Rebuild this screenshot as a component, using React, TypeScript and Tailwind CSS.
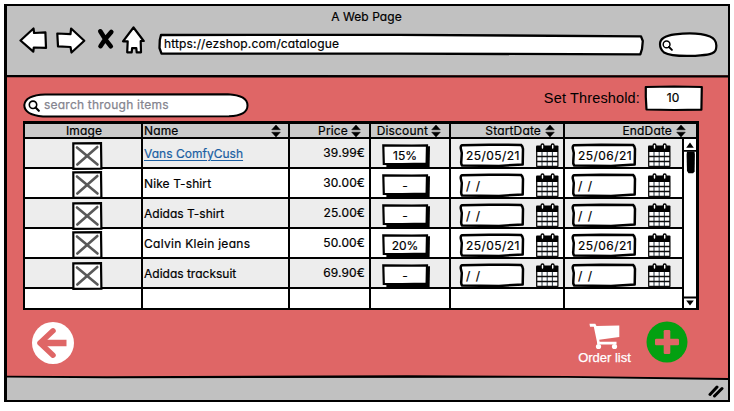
import type { ReactNode } from "react";

type Item = { name: string; track: string; price: string; discount: string; start: string; end: string };

const link = "tracking-[0.02px] text-[#1b5fa3] underline decoration-1 underline-offset-2 [-webkit-text-stroke:0.2px_#1b5fa3]";

const items: Item[] = [
  { name: "Vans ComfyCush", track: link, price: "39.99€", discount: "15%", start: "25/05/21", end: "25/06/21" },
  { name: "Nike T-shirt", track: "tracking-[0.1px]", price: "30.00€", discount: "-", start: "/ /", end: "/ /" },
  { name: "Adidas T-shirt", track: "tracking-[0px]", price: "25.00€", discount: "-", start: "/ /", end: "/ /" },
  { name: "Calvin Klein jeans", track: "tracking-[0.28px]", price: "50.00€", discount: "20%", start: "25/05/21", end: "25/06/21" },
  { name: "Adidas tracksuit", track: "tracking-[0px]", price: "69.90€", discount: "-", start: "/ /", end: "/ /" },
];

const columns = "grid grid-cols-[118px_147px_81px_80px_114px_119px_12px]";

/* A box whose outline is a hand-drawn path */
function Sketch({ w, h, d, sw = 3, className, children }: { w: number; h: number; d: string; sw?: number; className: string; children?: ReactNode }) {
  return (
    <div className={`relative flex shrink-0 items-center ${className}`}>
      <svg className="absolute inset-0" width={w} height={h} viewBox={`0 0 ${w} ${h}`} fill="white" stroke="black" strokeWidth={sw} strokeLinejoin="round">
        <path d={d} />
      </svg>
      <div className="relative flex w-full items-center">{children}</div>
    </div>
  );
}

function Sorter() {
  return (
    <svg width="10" height="12" viewBox="0 0 10 12" className="shrink-0">
      <path d="M5 0 9.3 4.8H.7zM.7 7.2h8.6L5 12z" stroke="black" strokeWidth=".5" strokeLinejoin="round" />
    </svg>
  );
}

function Magnifier({ className }: { className: string }) {
  return (
    <svg viewBox="0 0 12 12" className={className} fill="none" stroke="black">
      <circle cx="5" cy="4.8" r="3.7" strokeWidth="1.6" />
      <path d="m7.6 7.6 3.2 3.2" strokeWidth="2.1" strokeLinecap="round" />
    </svg>
  );
}

function Calendar() {
  return (
    <svg width="23" height="25" viewBox="0 0 23 25" className="shrink-0">
      <path d="M.5 4h22v20H.5z" fill="white" />
      <path d="M0 3.500q0-1 1-1h20.500q1 0 1 1V9H0z" />
      <path d="M6 9v14M11.200 9v14M16.400 9v14" stroke="#3c4a55" strokeWidth="1.100" />
      <path d="M.700 9v14.500M21.900 9v14.500M.3 13.500h22M.3 18.500h22M.3 23.500h22" stroke="#0c0c0c" strokeWidth="1.300" />
      <path d="M5.100 2.400a1.400 1.400 0 0 1 2.800 0v2.600a1.400 1.400 0 0 1-2.800 0zM15.300 2.400a1.400 1.400 0 0 1 2.800 0v2.600a1.400 1.400 0 0 1-2.800 0z" fill="white" stroke="black" strokeWidth="1.300" />
    </svg>
  );
}

function ImagePlaceholder() {
  return (
    <svg width="31" height="28" viewBox="0 0 31 28" className="relative z-10">
      <path d="M1.3 1.3 29 1.2l.4 25.4-28 .2z" fill="white" stroke="black" strokeWidth="2.2" />
      <path d="m5 5.500 20.500 17M25.300 5 5.300 22.500" stroke="#595959" strokeWidth="2.600" strokeLinecap="round" />
    </svg>
  );
}

function DateField({ value }: { value: string }) {
  return (
    <>
      <Sketch w={66} h={25} className="h-[25px] w-[66px]" d="M3 2.200 30 1.700 62 1.900Q63.600 3 64 6L63.700 21.500 40 22.900 3.200 22.600Q1.800 21 2.300 18L2.800 10 1.700 5Q1.700 2.500 3 2.200Z" sw={2.5}>
        <span className={`whitespace-pre pl-[7px] ${value === "/ /" ? "tracking-[1px]" : "tracking-[0.45px]"}`}>{value}</span>
      </Sketch>
      <div className="ml-[11px]">
        <Calendar />
      </div>
    </>
  );
}

function DiscountButton({ value }: { value: string }) {
  return (
    <div className="relative flex h-[24px] w-[48px] items-center">
      <svg className="absolute inset-0" width="48" height="24" viewBox="0 0 48 24">
        <path d="M4 3 48 2.200 47.600 23 4.400 23.300z" />
        <path d="M1.300 1.300 30 1.600l15-.2-.4 18.100L20 20.200 1.800 20z" fill="white" stroke="black" strokeWidth="2.200" />
      </svg>
      <span className="relative w-[46px] pb-px text-center">{value}</span>
    </div>
  );
}

const cell = "border-r-2 border-black";

function Row({ item, shaded, imageOffset }: { item: Item; shaded: boolean; imageOffset: string }) {
  return (
    <div className={`${columns} grid-rows-[30px] ${shaded ? "bg-[#ededed]" : "bg-white"}`}>
      <div className={`${cell} flex items-start justify-center border-b-2 pl-2 ${imageOffset}`}>
        <ImagePlaceholder />
      </div>
      <div className={`${cell} flex items-center border-b-2 pl-px pt-px`}>
        <span className={item.track}>{item.name}</span>
      </div>
      <div className={`${cell} flex items-center justify-end border-b-2 pr-[4px] tracking-[0.15px]`}>{item.price}</div>
      <div className={`${cell} flex items-start border-b-2 pl-[11px] pt-[5px]`}>
        <DiscountButton value={item.discount} />
      </div>
      <div className={`${cell} flex items-start border-b-2 pl-[8px] pt-[4px]`}>
        <DateField value={item.start} />
      </div>
      <div className={`${cell} flex items-start border-b-2 pl-[6px] pt-[4px]`}>
        <DateField value={item.end} />
      </div>
      <div className="bg-white" />
    </div>
  );
}

function Scrollbar() {
  return (
    <svg width="12" height="169" viewBox="0 0 12 169" className="absolute right-0 top-[15px]">
      <path d="M0 0h12v169H0z" fill="white" />
      <path d="M0 11.800h12M0 158.500h12" stroke="black" strokeWidth="1.800" />
      <path d="M6 3.500 9.800 8.800H2.200zM2.200 161.500h7.600L6 166.500z" />
      <path d="M3 12.500h7.500l.4 3-.3 17-1.500 1.800H4.500L3 32 2.600 16z" />
    </svg>
  );
}

export default function App() {
  return (
    <div className="h-[411px] w-[734px] overflow-hidden bg-white pl-[4px] pt-[4px] text-[12px] leading-[14px] text-black [-webkit-text-stroke:0.2px_black] [font-family:Inter,'Liberation_Sans',sans-serif] [font-feature-settings:'cv11','calt'_0]">
      <div className="flex h-[398px] w-[726px] flex-col border-2 border-l-[3px] border-black bg-[#df6666]">
        <header className="h-[69px] bg-[#c1c1c1] text-center">
          <div className="pr-[2px] pt-[4px] tracking-[0.05px]">A Web Page</div>
          <div className="flex pl-[12px] pt-[2px]">
            <svg width="139" height="32" viewBox="19 24 139 32" fill="white" stroke="black" strokeWidth="2.200" strokeLinejoin="round" className="shrink-0">
              <path d="M20.500 38.500 33.500 26.500l.6 4.500 11.300-.6.6 15.500-12.200-.4-.5 4.200z" />
              <path d="m57.300 31.500 13.200.7.6-5.700 13.200 12.200L71.500 50.500l-1-5.500-12.500-.6z" />
              <path d="m100.300 29.300 5 8 5.500 7M111.300 30l-6 7-4.800 7.200" fill="none" strokeWidth="4.600" strokeLinecap="round" />
              <path d="M133.500 25.500 143.700 39h-3l.3 11.300h-4.300l-.4-4.200-4.200.1-.4 4.200-4.500-.1.500-11h-4.700z" />
            </svg>
            <Sketch w={486} h={24} className="mt-[7px] h-[24px] w-[486px]" sw={2.3} d="M3 2 240 1.800 483 3.300 484.800 8 484 16 482.300 21.300 240 20.700 3.500 20.600 1.500 15 1.800 7Z">
              <span className="pb-[3px] pl-[6px] tracking-[0.14px]">https://ezshop.com/catalogue</span>
            </Sketch>
            <Sketch w={62} h={26} className="ml-[13px] mt-[6px] h-[26px] w-[62px]" sw={2.2} d="M3 12C3 6 9 3.500 18 2.400 30 1 45 1.500 53 4.500 59 7 60 12 59 17 58 22.500 50 23 38 23.800 25 24.300 13 24 7 20.500 4 18 3 15 3 12Z">
              <Magnifier className="ml-[5px] h-[11px] w-[11px]" />
            </Sketch>
          </div>
        </header>
        <svg width="721" height="3" viewBox="0 0 721 3" preserveAspectRatio="none" className="shrink-0">
          <path d="M0 0h300l150 .3H721V2.600H400L0 2.200z" />
        </svg>

        <main className="h-[297px] px-[16px] pt-[7px]">
          <div className="flex h-[36px]">
            <Sketch w={226} h={25} className="mt-[8px] h-[25px] w-[226px]" sw={2} d="M1.300 12C2 5 9 2 22 1.500L205 1.300C218 2 224.500 6 224.500 12.500 224.500 19 218 22.800 206 23.300L20 23.400C8 22.500 1.300 19 1.300 12Z">
              <Magnifier className="ml-[5px] h-[12px] w-[12px]" />
              <span className="pb-px pl-[4px] tracking-[0.22px] text-[#85858f] [-webkit-text-stroke:0.25px_#85858f]">search through items</span>
            </Sketch>
            <span className="ml-auto pr-[4px] pt-[5px] text-[14.5px] leading-[16px] tracking-[0.15px] [-webkit-text-stroke:0px] [font-family:'Liberation_Sans',sans-serif]">Set Threshold:</span>
            <Sketch w={60} h={27} className="mr-[8px] h-[27px] w-[60px]" sw={2.2} d="M1.800 2 30 1.500 57.800 2 57.400 24.700 30 25 2.500 24.500 1.800 12Z">
              <span className="w-full pb-px pr-[2px] text-center">10</span>
            </Sketch>
          </div>

          <section className="relative h-[189px] w-[676px] border-b-2 border-l-2 border-r-[3px] border-t-[3px] border-black">
            <div className={`${columns} h-[15px] border-b-2 border-black bg-[#cacaca] leading-[13px] tracking-[0.15px]`}>
              <div className={`${cell} pl-0.5 text-center`}>Image</div>
              <div className={`${cell} flex items-center justify-between pl-px pr-[7px]`}>Name<Sorter /></div>
              <div className={`${cell} flex items-center justify-end gap-[3px] pr-[8px]`}>Price<Sorter /></div>
              <div className={`${cell} flex items-center justify-end gap-[3px] pr-[8px]`}>Discount<Sorter /></div>
              <div className={`${cell} flex items-center justify-end gap-[4px] pr-[8px]`}>StartDate<Sorter /></div>
              <div className="col-span-2 flex items-center justify-end gap-[4px] pr-[10px]">EndDate<Sorter /></div>
            </div>
            {items.map((item, i) => (
              <Row key={item.name} item={item} shaded={i % 2 === 0} imageOffset={i === 1 || i === 3 ? "pt-[2px]" : "pt-[3px]"} />
            ))}
            <div className={`${columns} h-[19px] bg-white`}>
              <div className={cell} /><div className={cell} /><div className={cell} />
              <div className={cell} /><div className={cell} /><div className={cell} /><div />
            </div>
            <Scrollbar />
          </section>

          <div className="flex pt-[11px]">
            <svg width="44" height="44" viewBox="0 0 44 44" className="ml-[8px]">
              <circle cx="22" cy="22" r="21" fill="white" />
              <path d="M9 22 22 9.800M9 22 22 34.200" stroke="#df6666" strokeWidth="5.500" strokeLinecap="round" />
              <path d="M10 22H35.500" stroke="#df6666" strokeWidth="6.500" />
            </svg>
            <div className="ml-auto flex w-[60px] flex-col items-center">
              <svg width="31" height="27" viewBox="0 0 31 27" className="mt-[2px] shrink-0">
                <path d="M.5.700H6.300L7.500 3 30.300 2.500V14L10.200 16.800l.5 2H27.500v2.800H8.200l-.3-3.200L4.800 3.800H1z" fill="white" />
                <circle cx="9.500" cy="23.500" r="2.600" fill="white" />
                <circle cx="25.500" cy="23.500" r="2.600" fill="white" />
              </svg>
              <span className="mt-px whitespace-nowrap pl-px text-[13px] text-white [-webkit-text-stroke:0.25px_white] [font-family:'Liberation_Sans',sans-serif]">Order list</span>
            </div>
            <svg width="42" height="42" viewBox="0 0 42 42" className="ml-[12px] mr-[24px]">
              <circle cx="21" cy="21" r="20.500" fill="#03a011" />
              <rect x="17.700" y="9" width="6.600" height="24" rx="1.300" fill="#df6666" />
              <rect x="9" y="17.700" width="24" height="6.600" rx="1.300" fill="#df6666" />
            </svg>
          </div>
        </main>

        <svg width="721" height="5" viewBox="0 0 721 5" className="shrink-0 bg-[#c1c1c1]">
          <path d="M0 0H721V4H0z" fill="#df6666" />
          <path d="M0 2H500L721 4V5H0z" fill="#c1c1c1" />
          <path d="M0 .8 100 1.300 400 .3 560 1 721 3V5L560 2.800 100 3.200 0 2.500z" />
        </svg>
        <footer className="flex flex-1 justify-end bg-[#c1c1c1] pr-[4px] pt-[4px]">
          <svg width="16" height="14" viewBox="0 0 16 14" stroke="black" strokeWidth="3" strokeLinecap="round">
            <path d="m2 10.500 7-7.500M6.500 12 14 4.500" />
          </svg>
        </footer>
      </div>
    </div>
  );
}
